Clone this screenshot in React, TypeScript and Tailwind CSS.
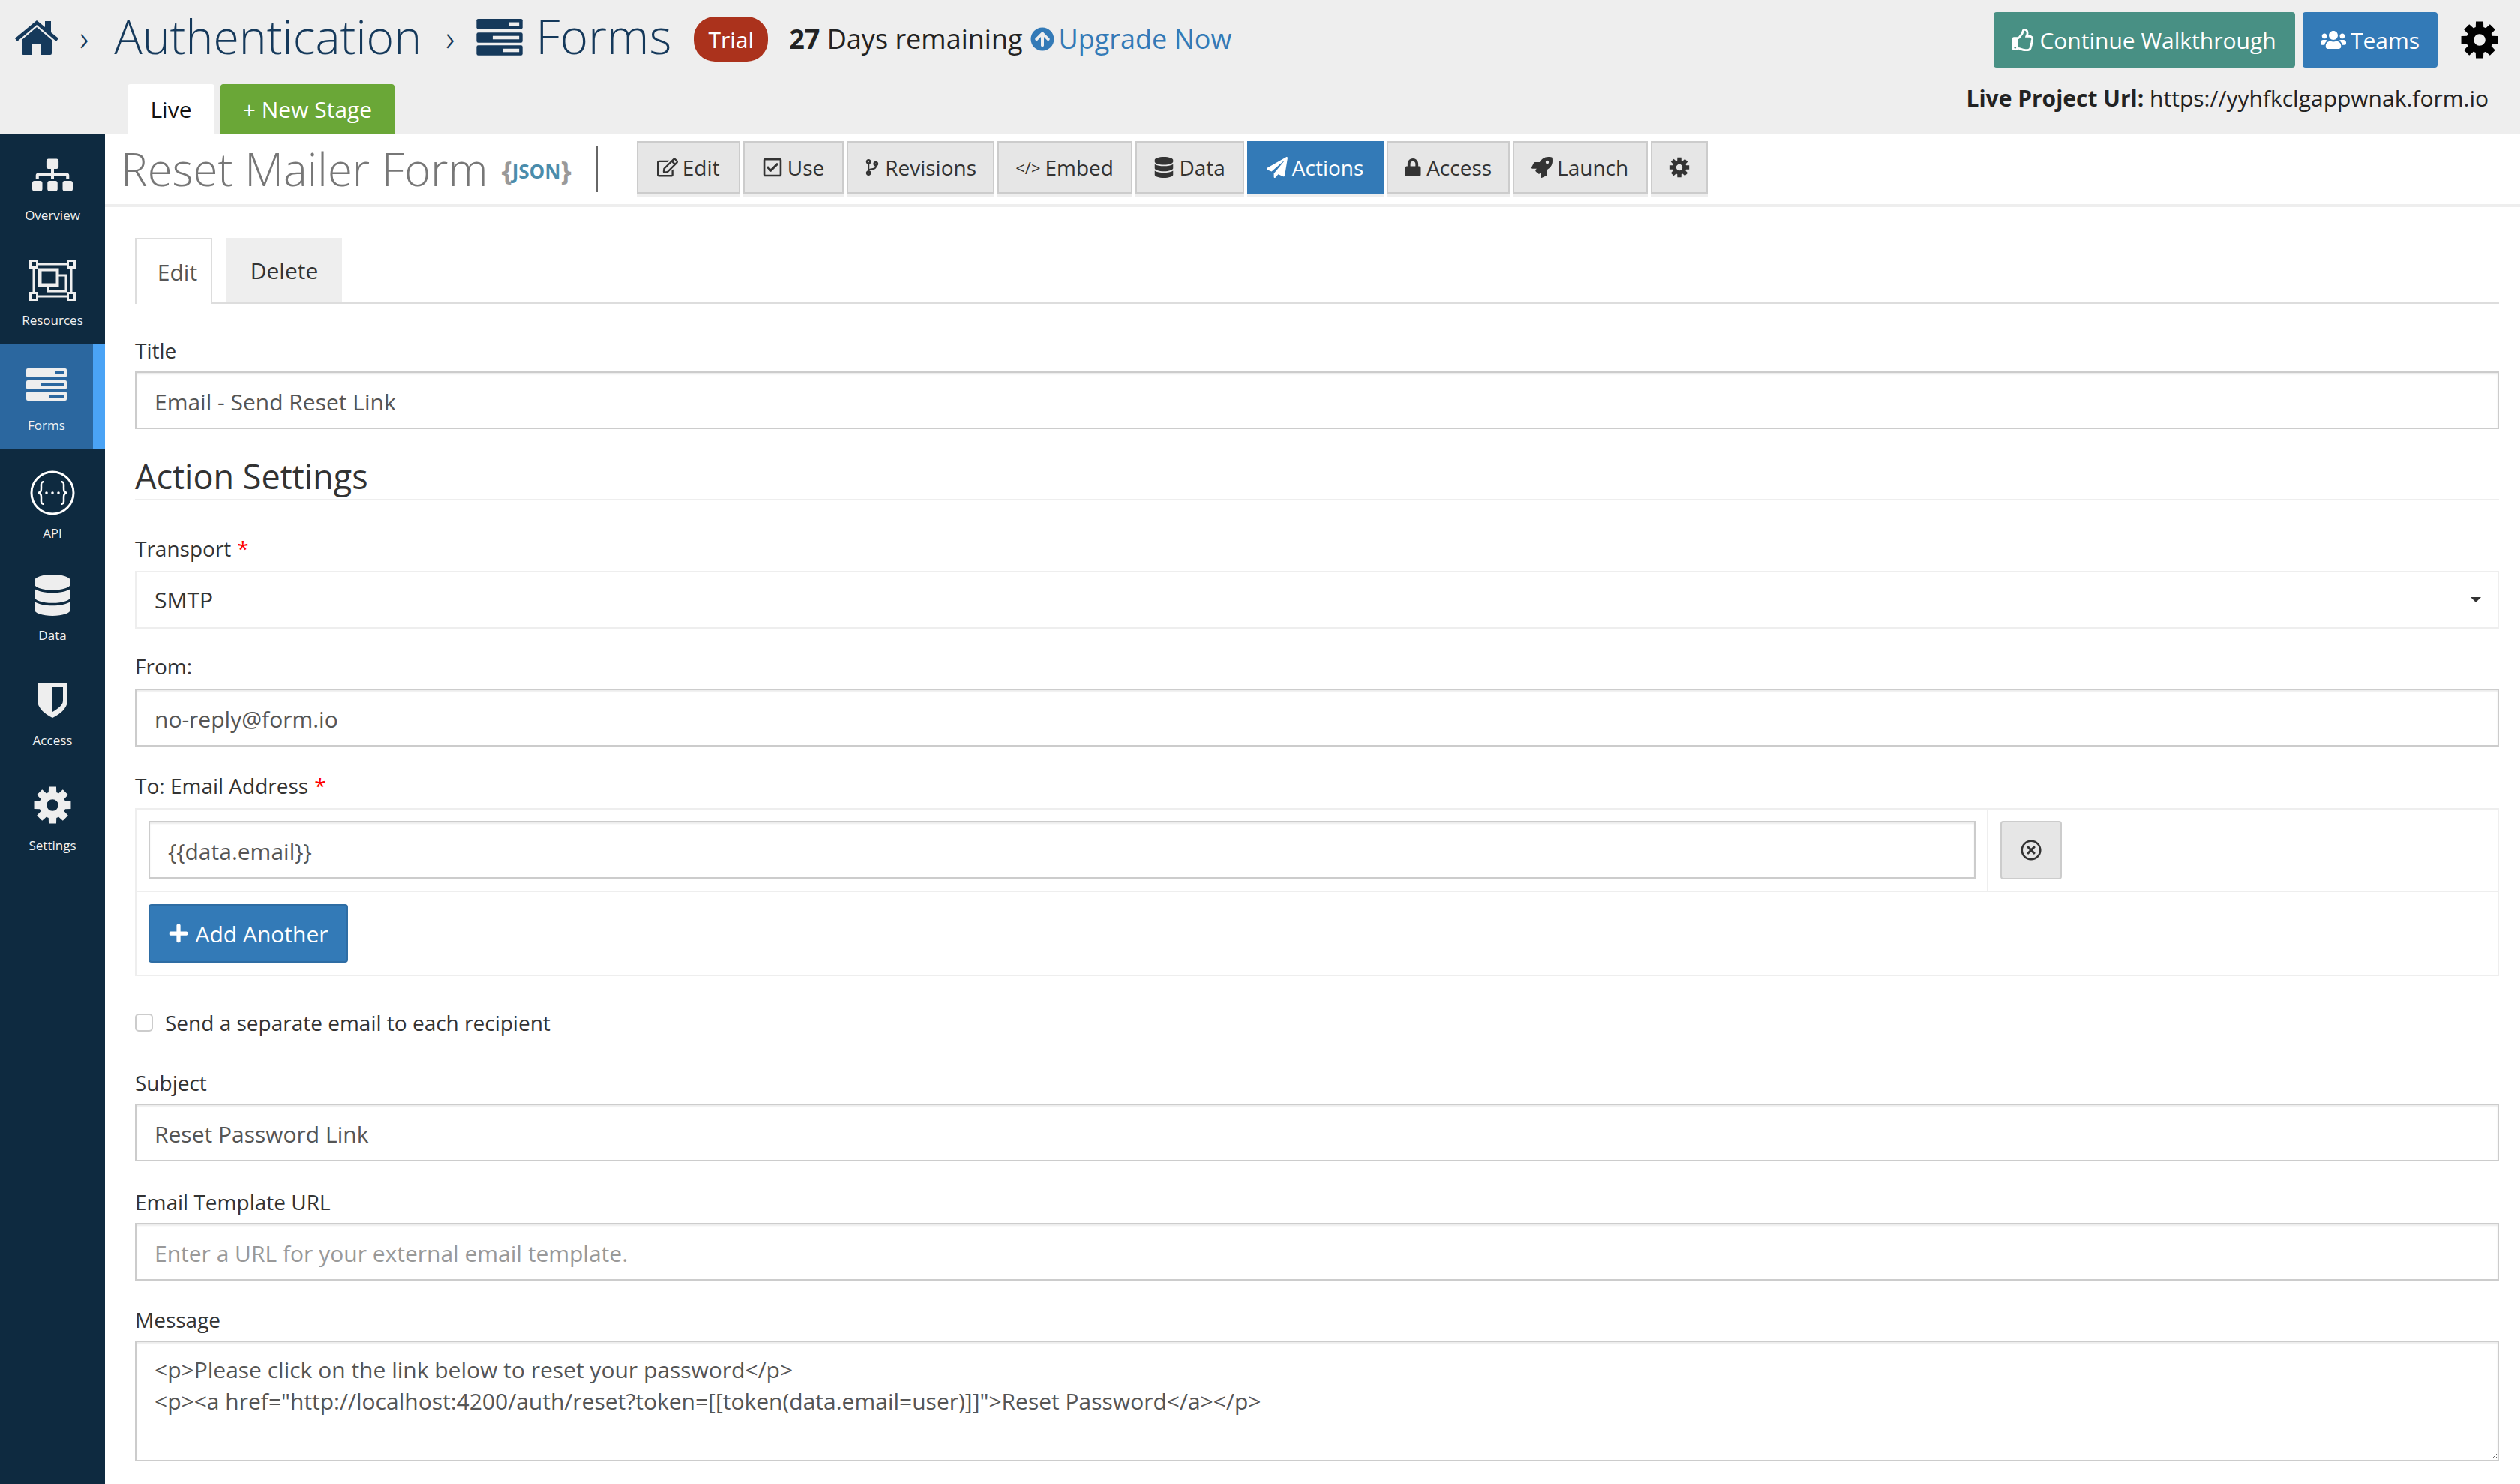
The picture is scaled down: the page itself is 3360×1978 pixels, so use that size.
import type { ReactNode } from 'react'
import {
  FaArrowCircleUp,
  FaCodeBranch,
  FaDatabase,
  FaLock,
  FaPaperPlane,
  FaPlus,
  FaRegCheckSquare,
  FaRegEdit,
  FaRegThumbsUp,
  FaRegTimesCircle,
  FaRocket,
  FaSitemap,
  FaUsers,
} from 'react-icons/fa'

const FONT = "font-['Open_Sans',sans-serif]"

// 8 tooth cog, worked out once so every size shares the same outline
const gearPath = (() => {
  const pts: string[] = []
  for (let i = 0; i < 8; i++) {
    const a = (i * Math.PI) / 4 - Math.PI / 2
    const corners: [number, number][] = [
      [-0.3, 17],
      [-0.2, 24],
      [0.2, 24],
      [0.3, 17],
    ]
    corners.forEach(([d, r]) => {
      pts.push(`${(25 + r * Math.cos(a + d)).toFixed(2)} ${(25 + r * Math.sin(a + d)).toFixed(2)}`)
    })
  }
  return `M${pts.join('L')}ZM25 17.5a7.5 7.5 0 1 0 0 15a7.5 7.5 0 1 0 0-15Z`
})()

const Gear = ({ className }: { className: string }) => (
  <svg viewBox="0 0 50 50" className={className} fill="currentColor">
    <path d={gearPath} fillRule="evenodd" />
  </svg>
)

const HomeIcon = () => (
  <svg viewBox="0 0 58 46" className="h-[46px] w-[58px]" fill="currentColor">
    <path d="M29 9 9 26v18a2 2 0 0 0 2 2h12V32h12v14h12a2 2 0 0 0 2-2V26z" />
    <path d="M29 0 0 24l3 4L29 6l26 22 3-4-10-8V1h-8v8z" />
  </svg>
)

const FormsIcon = ({ className, slot }: { className: string; slot: string }) => (
  <svg viewBox="0 0 54 44" className={className} fill="currentColor">
    <rect x="0" y="0" width="54" height="12" rx="2" />
    <rect x="0" y="16" width="54" height="12" rx="2" />
    <rect x="0" y="31" width="54" height="12" rx="2" />
    <rect x="38" y="4" width="12" height="4" fill={slot} />
    <rect x="19" y="20" width="31" height="4" fill={slot} />
    <rect x="31" y="35" width="19" height="4" fill={slot} />
  </svg>
)

const ResourcesIcon = () => (
  <svg viewBox="0 0 62 55" className="h-[55px] w-[62px]" fill="none" stroke="#eee" strokeWidth="3">
    <rect x="6" y="6" width="50" height="43" />
    <rect x="1.5" y="1.5" width="9" height="9" fill="#0e2a40" />
    <rect x="51.5" y="1.5" width="9" height="9" fill="#0e2a40" />
    <rect x="1.5" y="44.5" width="9" height="9" fill="#0e2a40" />
    <rect x="51.5" y="44.5" width="9" height="9" fill="#0e2a40" />
    <rect x="13" y="13" width="25" height="22" />
    <path d="M38 21h11v21H25v-7" />
    <rect x="15" y="14" width="22" height="19" />
  </svg>
)

const ApiIcon = () => (
  <svg viewBox="0 0 60 60" className="h-[60px] w-[60px]" fill="none" stroke="#fff">
    <circle cx="30" cy="30" r="28" strokeWidth="3" />
    <path d="M19 15c-5 0-4 4-4 8s0 6-4 7c4 1 4 3 4 7s-1 8 4 8M41 15c5 0 4 4 4 8s0 6 4 7c-4 1-4 3-4 7s1 8-4 8" strokeWidth="2.5" />
    <circle cx="22" cy="30" r="1.8" fill="#fff" stroke="none" />
    <circle cx="30" cy="30" r="1.8" fill="#fff" stroke="none" />
    <circle cx="38" cy="30" r="1.8" fill="#fff" stroke="none" />
  </svg>
)

const ShieldIcon = () => (
  <svg viewBox="0 0 40 47" className="h-[47px] w-[40px]">
    <path d="M2 0h36a2 2 0 0 1 2 2v22c0 10-10 18-20 23C10 42 0 34 0 24V2a2 2 0 0 1 2-2z" fill="#eee" />
    <path d="M20 6h14v18c0 6-7 11-14 15z" fill="#0e2a40" />
  </svg>
)

const sideItems: { label: string; icon: ReactNode; pad: string; active?: boolean }[] = [
  { label: 'Overview', icon: <FaSitemap className="h-[54px] w-[54px] text-[#eee]" />, pad: 'pt-[15px]' },
  { label: 'Resources', icon: <ResourcesIcon />, pad: 'pt-[15px]' },
  { label: 'Forms', icon: <FormsIcon className="h-[44px] w-[54px] text-[#eee]" slot="#2b679f" />, pad: 'pt-[15px]', active: true },
  { label: 'API', icon: <ApiIcon />, pad: 'pt-[19px]' },
  { label: 'Data', icon: <FaDatabase className="h-[55px] w-[48px] text-[#eee]" />, pad: 'pt-[15px]' },
  { label: 'Access', icon: <ShieldIcon />, pad: 'pt-[15px]' },
  { label: 'Settings', icon: <Gear className="h-[52px] w-[52px] text-[#eee]" />, pad: 'pt-[15px]' },
]

const toolbar: { label: string; icon: ReactNode; width: string; active?: boolean }[] = [
  { label: 'Edit', icon: <FaRegEdit />, width: 'w-[138px]' },
  { label: 'Use', icon: <FaRegCheckSquare />, width: 'w-[134px]' },
  { label: 'Revisions', icon: <FaCodeBranch className="text-[22px]" />, width: 'w-[197px]' },
  { label: 'Embed', icon: <span className="text-[22px]">&lt;/&gt;</span>, width: 'w-[180px]' },
  { label: 'Data', icon: <FaDatabase />, width: 'w-[145px]' },
  { label: 'Actions', icon: <FaPaperPlane />, width: 'w-[182px]', active: true },
  { label: 'Access', icon: <FaLock className="text-[24px]" />, width: 'w-[164px]' },
  { label: 'Launch', icon: <FaRocket />, width: 'w-[180px]' },
  { label: '', icon: <Gear className="h-[28px] w-[28px]" />, width: 'w-[76px]' },
]

const Field = ({
  label,
  required,
  tight,
  className,
  children,
}: {
  label: string
  required?: boolean
  tight?: boolean
  className: string
  children: ReactNode
}) => (
  <div className={className}>
    <div className={`flex items-center text-[28px] text-[#333] ${tight ? 'mb-[12px] h-[36px]' : 'mb-[8px] h-[40px]'}`}>
      {label}
      {required && <span className="ml-[8px] text-[#f00]">*</span>}
    </div>
    {children}
  </div>
)

const TextInput = ({ value, placeholder, className = 'w-full' }: { value?: string; placeholder?: string; className?: string }) => (
  <input
    readOnly
    value={value}
    placeholder={placeholder}
    className={`${className} block h-[77px] border-2 border-[#ccc] bg-white px-[24px] pt-[4px] text-[30px] text-[#555] shadow-[inset_0_2px_2px_rgba(0,0,0,0.08)] outline-none placeholder:text-[#999]`}
  />
)

export default function App() {
  return (
    <div className={`${FONT} flex h-[1978px] w-full flex-col overflow-hidden bg-white`}>
      <header className="flex h-[178px] justify-between bg-[#eee]">
        <div className="flex flex-col">
          <div className="flex h-[112px] items-start pl-[20px] pt-[12px]">
            <div className="flex h-[76px] items-center text-[#15395b]">
              <HomeIcon />
              <span className="ml-[28px] text-[48px] font-light">›</span>
              <span className="ml-[34px] -mt-[4px] text-[62.5px] font-light leading-none">Authentication</span>
              <span className="ml-[32px] text-[48px] font-light">›</span>
              <FormsIcon className="ml-[28px] h-[50px] w-[64px]" slot="#eee" />
              <span className="ml-[16px] -mt-[4px] text-[64px] font-light leading-none">Forms</span>
              <span className="ml-[30px] mt-[4px] flex h-[60px] w-[99px] items-center justify-center rounded-[28px] bg-[#ab321c] text-[30px] text-white">
                Trial
              </span>
              <span className="ml-[28px] mt-[4px] text-[36px] text-[#222]">
                <b>27</b> Days remaining
              </span>
              <FaArrowCircleUp className="ml-[10px] mt-[4px] h-[32px] w-[32px] text-[#337ab7]" />
              <span className="ml-[6px] mt-[4px] text-[36px] text-[#337ab7]">Upgrade Now</span>
            </div>
          </div>
          <div className="flex h-[66px] gap-[8px] pl-[170px] text-[30px]">
            <div className="flex w-[116px] items-center justify-center rounded-t-[4px] bg-white text-[#111]">Live</div>
            <div className="flex w-[232px] items-center justify-center rounded-t-[4px] bg-[#6aa737] text-white">+ New Stage</div>
          </div>
        </div>
        <div className="flex flex-col items-end pr-[28px]">
          <div className="flex items-center pt-[16px]">
            <button className="flex h-[74px] w-[402px] items-center justify-center gap-[6px] rounded-[4px] bg-[#489084] text-[30px] text-white">
              <FaRegThumbsUp className="h-[30px] w-[30px]" /> Continue Walkthrough
            </button>
            <button className="ml-[10px] flex h-[74px] w-[180px] items-center justify-center gap-[6px] rounded-[4px] bg-[#337ab7] text-[30px] text-white">
              <FaUsers className="h-[34px] w-[34px]" /> Teams
            </button>
            <Gear className="ml-[30px] h-[52px] w-[52px] text-black" />
          </div>
          <div className="mr-[14px] mt-[18px] text-[30px] text-[#222]">
            <b>Live Project Url:</b> https://yyhfkclgappwnak.form.io
          </div>
        </div>
      </header>

      <div className="flex flex-1">
        <aside className="w-[140px] bg-[#0e2a40]">
          {sideItems.map((item) => (
            <div
              key={item.label}
              className={`flex h-[140px] flex-col items-center ${item.pad} ${item.active ? 'border-r-[16px] border-[#4aa3f5] bg-[#2b679f]' : ''}`}
            >
              <div className="flex h-[80px] items-center justify-center">{item.icon}</div>
              <div className="mt-[2px] flex h-[24px] items-center text-[17px] font-medium text-[#f2f2f2]">{item.label}</div>
            </div>
          ))}
        </aside>

        <main className="flex-1">
          <div className="flex h-[98px] items-start border-b-4 border-[#eee] pl-[21px]">
            <div className="mt-[4px] flex h-[86px] items-center">
              <h1 className="text-[60px] font-light leading-none text-[#777]">Reset Mailer Form</h1>
              <span className="ml-[18px] mt-[6px] flex items-center font-bold leading-none text-[#4a8cab]">
                <span className="text-[36px] text-[#999]">{'{'}</span>
                <span className="text-[26px]">JSON</span>
                <span className="text-[36px] text-[#999]">{'}'}</span>
              </span>
              <span className="ml-[32px] h-[61px] w-[3px] bg-[#666]" />
            </div>
            <div className="ml-[52px] mt-[10px] flex gap-[4px]">
              {toolbar.map((btn) => (
                <div
                  key={btn.width + btn.label}
                  className={`${btn.width} flex h-[70px] items-center justify-center gap-[6px] border-2 text-[28px] shadow-[0_4px_0_#eee] ${
                    btn.active ? 'border-[#337ab7] bg-[#337ab7] text-white' : 'border-[#ccc] bg-[#e6e6e6] text-[#333]'
                  }`}
                >
                  {btn.icon}
                  {btn.label}
                </div>
              ))}
            </div>
          </div>

          <div className="pl-[40px] pr-[28px] pt-[41px]">
            <div className="flex h-[88px] gap-[19px] border-b-2 border-[#ddd] text-[30px]">
              <div className="-mb-[2px] flex w-[103px] items-center justify-center border-2 border-b-0 border-[#ddd] bg-white pl-[10px] text-[#555]">Edit</div>
              <div className="flex w-[154px] items-center justify-center bg-[#eee] text-[#333]">Delete</div>
            </div>

            <Field label="Title" className="mt-[42px]">
              <TextInput value="Email - Send Reset Link" />
            </Field>

            <h2 className="mt-[34px] flex h-[61px] items-center border-b-2 border-[#eee] pb-[2px] text-[45px] text-[#333]">Action Settings</h2>

            <Field label="Transport" required tight className="mt-[46px]">
              <div className="flex h-[77px] items-center justify-between border-2 border-[#eee] pl-[24px] pr-[22px] text-[30px] text-[#333]">
                SMTP
                <span className="border-x-[7px] border-t-[7px] border-x-transparent border-t-[#333]" />
              </div>
            </Field>

            <Field label="From:" tight className="mt-[32px]">
              <TextInput value="no-reply@form.io" />
            </Field>

            <Field label="To: Email Address" required tight className="mt-[34px]">
              <div className="border-2 border-[#eee]">
                <div className="flex h-[110px] border-b-2 border-[#eee]">
                  <div className="w-[2469px] border-r-2 border-[#eee] px-[16px] pt-[15px]">
                    <TextInput value="{{data.email}}" className="w-[2436px]" />
                  </div>
                  <div className="pl-[16px] pt-[15px]">
                    <button className="flex h-[78px] w-[82px] items-center justify-center rounded-[4px] border-2 border-[#ccc] bg-[#e6e6e6] text-[#333]">
                      <FaRegTimesCircle className="h-[28px] w-[28px]" />
                    </button>
                  </div>
                </div>
                <div className="px-[16px] pt-[16px]">
                  <button className="flex h-[78px] w-[266px] items-center justify-center gap-[8px] rounded-[4px] border-2 border-[#2e6da4] bg-[#337ab7] text-[30px] text-white">
                    <FaPlus className="h-[28px] w-[28px]" /> Add Another
                  </button>
                </div>
                <div className="h-[16px]" />
              </div>
            </Field>

            <label className="mt-[42px] flex h-[40px] items-center text-[28px] text-[#333]">
              <span className="h-[24px] w-[24px] rounded-[5px] border-2 border-[#ccc] bg-white" />
              <span className="ml-[16px]">Send a separate email to each recipient</span>
            </label>

            <Field label="Subject" className="mt-[40px]">
              <TextInput value="Reset Password Link" />
            </Field>

            <Field label="Email Template URL" className="mt-[34px]">
              <TextInput placeholder="Enter a URL for your external email template." />
            </Field>

            <Field label="Message" className="mt-[32px]">
              <textarea
                readOnly
                value={'<p>Please click on the link below to reset your password</p>\n<p><a href="http://localhost:4200/auth/reset?token=[[token(data.email=user)]]">Reset Password</a></p>'}
                className="block h-[161px] w-full border-2 border-[#ccc] px-[24px] pt-[16px] text-[30px] leading-[42px] text-[#555] shadow-[inset_0_2px_2px_rgba(0,0,0,0.08)] outline-none"
              />
            </Field>
          </div>
        </main>
      </div>
    </div>
  )
}
